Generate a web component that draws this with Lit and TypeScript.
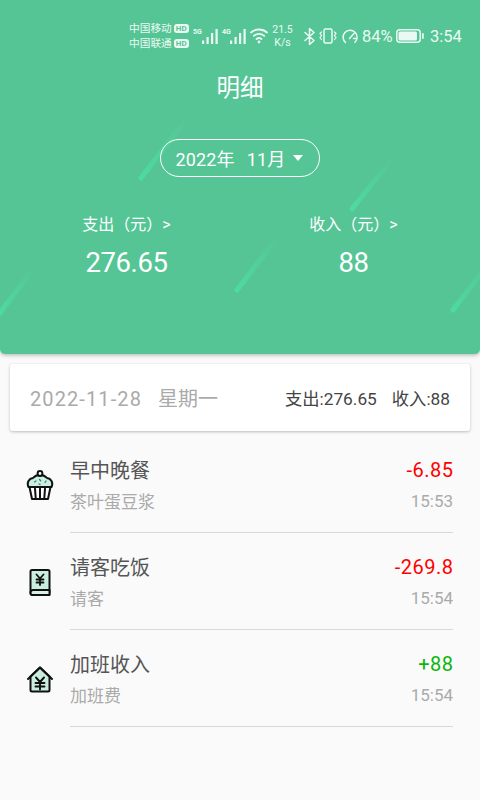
import { LitElement, html, css, svg } from "lit";
import { customElement } from "lit/decorators.js";

const cupcake = html`<svg viewBox="0 0 30 30" width="30" height="30" fill="none" stroke="#111" stroke-width="2" stroke-linejoin="round" stroke-linecap="round">
  <path d="M3.500 17c-2.200-4.500.6-8.500 4.500-9 1.600-2 4.400-3 7-3s5.400 1 7 3c3.900.5 6.700 4.500 4.500 9z" fill="#c9eee0"/>
  <circle cx="15" cy="3.500" r="2.400" fill="#fff"/>
  <path d="M4.500 17l2.500 12h16l2.500-12z" fill="#fff"/>
  <path d="M10 18.500l.7 9.500M15 18.500v9.500M20 18.500l-.7 9.500" stroke-width="2"/>
  <path d="M9.500 12l1.500-1M14.500 9.500l1.200 1.200M20 12.500l1-1.500M14 14l1 .4" stroke="#4b7a6a" stroke-width="1.300"/>
</svg>`;

const book = html`<svg viewBox="0 0 30 30" width="30" height="30" fill="none" stroke="#111" stroke-width="2" stroke-linejoin="round" stroke-linecap="round">
  <path d="M7 3h16a1.500 1.500 0 0 1 1.500 1.500v22a1.500 1.500 0 0 1-1.500 1.500h-16a1.500 1.500 0 0 1-1.500-1.500v-22a1.500 1.500 0 0 1 1.500-1.500z" fill="#c9eee0"/>
  <path d="M5.500 26c0-1.500.8-3 2.500-3h16.500v5h-17a2.200 2.200 0 0 1-2-2z" fill="#d9efe7"/>
  <path d="M11.500 7.500l3.500 4 3.500-4M15 11.500v6.500M11.500 12.500h7M11.500 15.500h7" stroke-width="1.800"/>
</svg>`;

const house = html`<svg viewBox="0 0 30 30" width="30" height="30" fill="none" stroke="#111" stroke-width="2" stroke-linejoin="round" stroke-linecap="round">
  <path d="M15 3.500l-9.500 9v13.500a1.500 1.500 0 0 0 1.500 1.500h16a1.500 1.500 0 0 0 1.500-1.500v-13.500z" fill="#c9eee0"/>
  <path d="M3 15l12-11.500 12 11.500"/>
  <path d="M11 13.500l4 4.500 4-4.500M15 18v7.500M10.500 19h9M10.500 22.500h9" stroke-width="1.900"/>
</svg>`;

const signal = html`<svg width="16" height="15" viewBox="0 0 16 15" fill="#eafaf3">
  <rect x="0" y="11.500" width="2.200" height="3.500"/><rect x="4.500" y="8" width="2.200" height="7"/><rect x="9" y="4" width="2.200" height="11"/><rect x="13.500" y="0" width="2.200" height="15"/>
</svg>`;

const streaks = svg`<svg class="streaks" viewBox="0 0 480 354" width="480" height="354" fill="none" stroke-linecap="round" stroke-width="5">
  <defs>
    <linearGradient id="a" x1="0" y1="1" x2="1" y2="0">
      <stop offset="0" stop-color="#4ddb9e"/>
      <stop offset="1" stop-color="#4ddb9e" stop-opacity="0"/>
    </linearGradient>
  </defs>
  <path stroke="url(#a)" d="M141 178L187 118"/>
  <path stroke="url(#a)" d="M352 209L392 159"/>
  <path stroke="url(#a)" d="M237 290L277 238"/>
  <path stroke="url(#a)" d="M-1 314L34 268"/>
  <path stroke="url(#a)" d="M453 310L490 262"/>
</svg>`;

const rows = [
  { icon: cupcake, title: "早中晚餐", sub: "茶叶蛋豆浆", amount: "-6.85", cls: "out", time: "15:53" },
  { icon: book, title: "请客吃饭", sub: "请客", amount: "-269.8", cls: "out", time: "15:54" },
  { icon: house, title: "加班收入", sub: "加班费", amount: "+88", cls: "in", time: "15:54" },
];

@customElement("app-root")
export class AppRoot extends LitElement {
  static styles = css`
    :host {
      display: block;
      width: 480px;
      height: 800px;
      overflow: hidden;
      background: #fafafa;
      font-family: Roboto, "Noto Sans CJK SC", sans-serif;
    }
    .header {
      position: relative;
      height: 354px;
      box-sizing: border-box;
      background: #56c596;
      border-radius: 0 0 5px 5px;
      box-shadow: 0 1px 4px rgba(0, 0, 0, 0.3);
      color: #fff;
      overflow: hidden;
    }
    .streaks { position: absolute; left: 0; top: 0; }
    .content { position: relative; display: flex; flex-direction: column; align-items: center; }
    .status {
      align-self: stretch;
      height: 60px;
      padding: 12px 0 0 129px;
      box-sizing: border-box;
      display: flex;
      align-items: center;
      color: #eafaf3;
    }
    .carriers { display: flex; flex-direction: column; font-size: 10.700px; line-height: 15px; width: 58px; margin-right: 6px; flex: none; }
    .carrier { display: flex; align-items: center; gap: 2px; white-space: nowrap; }
    .hd { font-size: 8px; font-weight: 700; line-height: 9px; background: #eafaf3; color: #56c596; border-radius: 3px; padding: 0 2px; }
    .net { position: relative; width: 29px; height: 15px; flex: none; }
    .net + .net { width: 28px; }
    .net small { position: absolute; left: 0; top: 0; font-size: 7px; font-weight: 700; line-height: 7px; }
    .net svg { position: absolute; right: 4px; bottom: 0; }
    .speed { display: flex; flex-direction: column; align-items: center; font-size: 10.500px; line-height: 13px; width: 21px; margin: 0 11px 0 4px; flex: none; }
    .status svg.ic { display: block; flex: none; }
    .vib { margin-left: 4px; }
    .gauge { margin-left: 5px; }
    .pct { font-size: 16.500px; width: 30px; margin: 0 4px; flex: none; white-space: nowrap; }
    .clock { font-size: 16.500px; margin-left: 6px; white-space: nowrap; }
    .title { font-size: 23.500px; line-height: 30px; margin-top: 13px; }
    .pill {
      margin-top: 36px;
      width: 160px;
      height: 38px;
      box-sizing: border-box;
      border: 1.600px solid #fff;
      border-radius: 19px;
      display: flex;
      align-items: center;
      padding-left: 14.500px;
      font-size: 18px;
      letter-spacing: .15px;
      white-space: pre;
    }
    .month { margin-left: 12px; }
    .caret { width: 0; height: 0; border: 5px solid transparent; border-top: 6px solid #fff; border-bottom: 0; margin-left: 8px; }
    .stats { align-self: stretch; display: grid; grid-template-columns: 227px 227px; margin: 37px 0 0 13px; }
    .stat { display: flex; flex-direction: column; align-items: center; }
    .label { font-size: 16px; line-height: 22px; white-space: nowrap; }
    .value { font-size: 27.500px; letter-spacing: -.4px; line-height: 36px; margin-top: 9px; }
    .card {
      margin: 10px 10px 0;
      height: 67px;
      padding: 0 20px;
      background: #fff;
      border-radius: 3px;
      box-shadow: 0 1px 3px rgba(0, 0, 0, 0.25);
      display: flex;
      justify-content: space-between;
      align-items: center;
    }
    .date { color: #aaa; font-size: 20px; display: flex; gap: 16px; align-items: baseline; }
    .digits { letter-spacing: 1.100px; }
    .totals { color: #444; font-size: 17.300px; display: flex; gap: 15px; align-items: baseline; }
    .list { padding: 5px 27px 0 25px; }
    .row { height: 97px; box-sizing: border-box; display: flex; align-items: center; gap: 15px; }
    .icon { width: 30px; height: 30px; flex: none; }
    .body {
      flex: 1;
      height: 97px;
      box-sizing: border-box;
      padding-top: 18px;
      border-bottom: 1.500px solid #d8d8d8;
      display: grid;
      grid-template-columns: 1fr auto;
      grid-auto-rows: 31px;
      align-items: center;
    }
    .t { font-size: 20px; color: #555; }
    .s { font-size: 17px; color: #aaa; }
    .amt { font-size: 20px; text-align: right; letter-spacing: .5px; margin-right: -.5px; }
    .out { color: #f00; }
    .in { color: #0cb50c; }
    .time { font-size: 17px; color: #aaa; text-align: right; }
  `;

  render() {
    return html`
      <div class="header">
        ${streaks}
        <div class="content">
          <div class="status">
            <div class="carriers">
              <div class="carrier">中国移动<span class="hd">HD</span></div>
              <div class="carrier">中国联通<span class="hd">HD</span></div>
            </div>
            <div class="net"><small>5G</small>${signal}</div>
            <div class="net"><small>4G</small>${signal}</div>
            <svg class="ic" width="18" height="16" viewBox="0 0 18 16" fill="none" stroke="#eafaf3" stroke-width="1.800" stroke-linecap="round">
              <path d="M1 4.500c4.500-4 11.500-4 16 0M3.800 7.800c3-2.700 7.400-2.700 10.400 0M6.500 11c1.500-1.200 3.500-1.200 5 0"/>
              <circle cx="9" cy="14" r="1.400" fill="#eafaf3" stroke="none"/>
            </svg>
            <div class="speed"><span>21.5</span><span>K/s</span></div>
            <svg class="ic" width="11" height="17" viewBox="0 0 11 17" fill="none" stroke="#eafaf3" stroke-width="1.500" stroke-linejoin="round" stroke-linecap="round">
              <path d="M1 4.500l9 8-4.500 4v-16l4.500 4-9 8"/>
            </svg>
            <svg class="ic vib" width="18" height="16" viewBox="0 0 18 16" fill="none" stroke="#eafaf3" stroke-width="1.500" stroke-linecap="round">
              <rect x="5" y="1" width="8" height="14" rx="1.500"/>
              <path d="M2.500 4l-1.500 1.500 1.500 2-1.500 2 1.500 2M15.500 4l1.500 1.500-1.500 2 1.500 2-1.500 2" stroke-width="1.200"/>
            </svg>
            <svg class="ic gauge" width="16" height="16" viewBox="0 0 16 16" fill="none" stroke="#eafaf3" stroke-width="1.500" stroke-linecap="round">
              <path d="M3.500 14.500a7 7 0 1 1 9.500-.3M7.500 10.500l4.500-5M11.500 10.500h3"/>
            </svg>
            <span class="pct">84%</span>
            <svg class="ic" width="28" height="14" viewBox="0 0 28 14" fill="none">
              <rect x=".8" y=".8" width="23.400" height="12.400" rx="3" stroke="#eafaf3" stroke-width="1.500"/>
              <rect x="2.500" y="2.500" width="18.500" height="9" rx="1.500" fill="#eafaf3"/>
              <rect x="26" y="4" width="1.800" height="6" rx=".9" fill="#eafaf3"/>
            </svg>
            <span class="clock">3:54</span>
          </div>
          <div class="title">明细</div>
          <div class="pill">2022年<span class="month">11月</span><span class="caret"></span></div>
          <div class="stats">
            <div class="stat"><div class="label">支出（元）&gt;</div><div class="value">276.65</div></div>
            <div class="stat"><div class="label">收入（元）&gt;</div><div class="value">88</div></div>
          </div>
        </div>
      </div>
      <div class="card">
        <div class="date"><span class="digits">2022-11-28</span><span>星期一</span></div>
        <div class="totals"><span>支出:276.65</span><span>收入:88</span></div>
      </div>
      <div class="list">
        ${rows.map(
          (r) => html`<div class="row">
            <div class="icon">${r.icon}</div>
            <div class="body">
              <div class="t">${r.title}</div>
              <div class="amt ${r.cls}">${r.amount}</div>
              <div class="s">${r.sub}</div>
              <div class="time">${r.time}</div>
            </div>
          </div>`
        )}
      </div>
    `;
  }
}
